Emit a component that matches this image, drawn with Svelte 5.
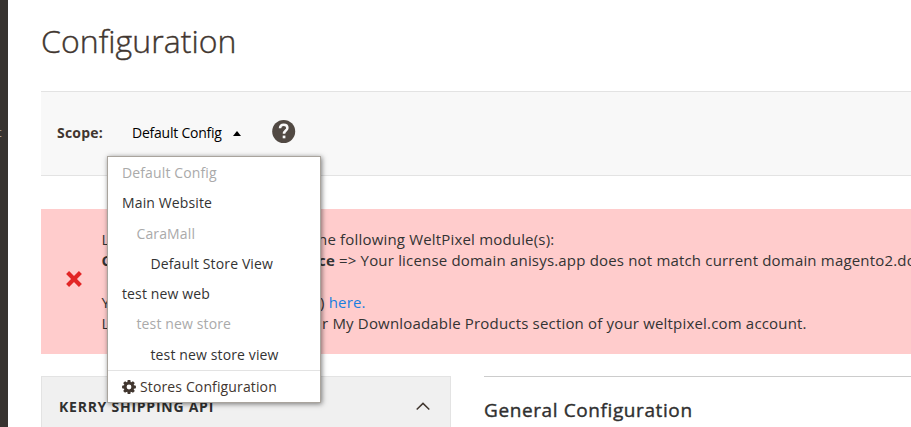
<script>
  const stores = [
    { name: 'Default Config', level: 0, muted: true },
    { name: 'Main Website', level: 0 },
    { name: 'CaraMall', level: 1, muted: true },
    { name: 'Default Store View', level: 2 },
    { name: 'test new web', level: 0 },
    { name: 'test new store', level: 1, muted: true },
    { name: 'test new store view', level: 2 }
  ];
</script>

<div class="page">
  <aside class="menu"><span>t</span></aside>
  <main>
    <h1>Configuration</h1>
    <div class="scope">
      <strong>Scope:</strong>
      <div class="switcher">
        <button>Default Config<i></i></button>
        <div class="dropdown">
          <ul>
            {#each stores as s}
              <li class="level{s.level}" class:muted={s.muted}>{s.name}</li>
            {/each}
          </ul>
          <div class="manage">
            <svg width="14" height="14" viewBox="-7 -7 14 14">
              <g fill="#41362f">
                {#each [0, 45, 90, 135] as a}
                  <path d="M-1.3-6.9H1.3L1.900-4V4L1.3 6.9H-1.3L-1.900 4V-4Z" transform="rotate({a})" />
                {/each}
                <circle r="4.900" />
              </g>
              <circle r="2.4" fill="#fff" />
            </svg>
            <span>Stores Configuration</span>
          </div>
        </div>
      </div>
      <div class="help">
        <svg width="24" height="24" viewBox="0 0 24 24">
          <circle cx="11.700" cy="12.500" r="11.5" fill="#514943" />
          <path d="M8 9.300C8.100 7 9.700 5.700 11.700 5.700c2.200 0 3.700 1.200 3.700 3.200 0 2.700-3.400 2.700-3.400 5.900" fill="none" stroke="#f8f8f8" stroke-width="2.500" />
          <path d="M10.700 16.600h2.700v2.700h-2.700z" fill="#f8f8f8" />
        </svg>
      </div>
    </div>

    <div class="message">
      <svg width="18" height="18" viewBox="0 0 18 18"><path d="M2.600 2.600L15.400 15.400M15.400 2.600L2.600 15.400" stroke="#e22626" stroke-width="4.200" /></svg>
      <div class="lines">
        <p><span class="lead">L</span><span>he following WeltPixel module(s):</span></p>
        <p><span class="lead"><b>C</b></span><span><b>ce</b> =&gt; Your license domain anisys.app does not match current domain magento2.docker</span></p>
        <p>&nbsp;</p>
        <p><span class="lead link">Y</span><span>) <a href="#here">here.</a></span></p>
        <p><span class="lead last">L</span><span>r My Downloadable Products section of your weltpixel.com account.</span></p>
      </div>
    </div>

    <div class="columns">
      <nav>
        <b>KERRY SHIPPING API</b>
        <svg width="14" height="9" viewBox="0 0 14 9"><path d="M.7 7.500L7 1.400L13.300 7.500" fill="none" stroke="#41362f" stroke-width="1.500" /></svg>
      </nav>
      <section><h2>General Configuration</h2></section>
    </div>
  </main>
</div>

<style>
  .page {
    display: flex;
    width: 911px;
    height: 427px;
    overflow: hidden;
    background: #fff;
    color: #41362f;
    font: 14px/21px 'Open Sans', sans-serif;
  }
  .menu { flex: none; width: 8px; box-sizing: border-box; padding-top: 122px; background: #373330; color: #aaa6a0; font-size: 13px; overflow: hidden; }
  .menu span { margin-left: -3px; }
  main { flex: none; width: 870px; margin-left: 33px; }
  h1 { margin: 0; padding-top: 20px; height: 71px; font-size: 32px; line-height: 42px; font-weight: 300; letter-spacing: .05px; -webkit-text-stroke: .4px #41362f; }
  .scope { display: flex; box-sizing: border-box; height: 85px; padding: 30px 0 0 16px; background: #f8f8f8; border-top: 1px solid #e3e3e3; border-bottom: 1px solid #e3e3e3; }
  .scope strong { width: 75px; font-weight: 700; letter-spacing: .2px; }
  .switcher { position: relative; width: 140px; }
  button { display: flex; align-items: center; padding: 0; border: 0; background: none; color: #000; font: inherit; white-space: nowrap; letter-spacing: -.23px; }
  button i { margin: 2px 0 0 11px; border: 4px solid transparent; border-top: 0; border-bottom: 5px solid #000; }
  .help { height: 24px; margin-top: -3px; }
  .help svg { display: block; overflow: visible; }
  .dropdown { position: absolute; z-index: 2; top: 34px; left: -25px; width: 212px; height: 245px; background: #fff; border: 1px solid #a9a49d; box-shadow: 1px 1px 5px rgba(0, 0, 0, .5); letter-spacing: .13px; }
  ul { list-style: none; margin: 0; padding: 0; height: 213px; box-sizing: border-box; }
  li { height: 30.300px; line-height: 31px; padding-left: 14px; color: #333; white-space: nowrap; }
  .level1 { padding-left: 28.500px; }
  .level2 { padding-left: 42.500px; }
  .muted { color: #aaa; }
  .manage { display: flex; align-items: center; gap: 4px; height: 31px; padding-left: 14px; border-top: 1px solid #e3e3e3; white-space: nowrap; }
  .message { display: flex; align-items: center; height: 145px; margin-top: 33px; padding-left: 23.500px; background: #fcc; }
  .message svg { flex: none; margin-top: -5px; }
  .lines { margin-left: 19px; padding-bottom: 1px; font-size: 15px; letter-spacing: .18px; color: #333; }
  p { display: flex; margin: 0; white-space: nowrap; }
  .lead { width: 216.500px; }
  .link { width: 218.500px; }
  .last { width: 220.500px; }
  a { color: #1a7ee0; text-decoration: none; }
  .columns { display: flex; gap: 33px; height: 60px; margin-top: 22px; }
  nav { display: flex; justify-content: space-between; box-sizing: border-box; width: 410px; padding: 19px 20px 0 17px; background: #f0f0f0; border: 1px solid #e3e3e3; color: #303030; }
  nav b { letter-spacing: .75px; }
  nav svg { margin-top: 6px; }
  section { flex: 1; border-top: 1px solid #ccc; }
  h2 { margin: 20px 0 0; font-size: 19px; line-height: 26px; font-weight: 500; letter-spacing: .6px; color: #303030; -webkit-text-stroke: .4px #303030; }
</style>
